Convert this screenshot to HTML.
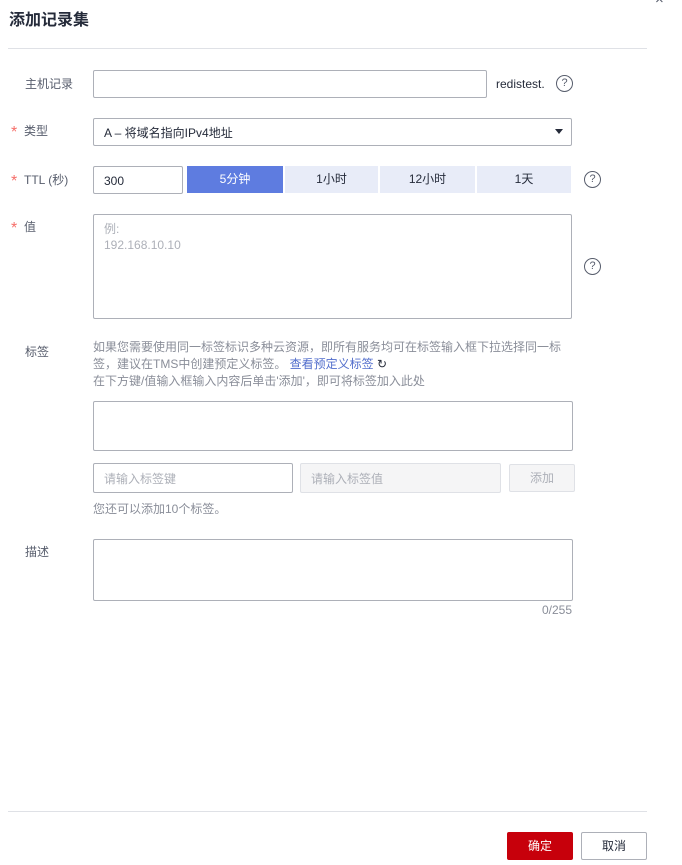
<!DOCTYPE html>
<html><head><meta charset="utf-8"><style>
*{box-sizing:border-box;margin:0;padding:0}
body{width:682px;height:865px;background:#fff;font-family:"Liberation Sans","Noto Sans CJK SC",sans-serif;font-size:12px;color:#252b3a;position:relative;overflow:hidden}
.a{position:absolute}
.box{position:absolute;border:1px solid #adb0b8;border-radius:2px;background:#fff}
.lbl{position:absolute;font-size:12px;color:#575d6c;line-height:16px}
.star{position:absolute;color:#f66f6a;font-size:16px;line-height:16px;top:2px}
.q{position:absolute;width:17px;height:17px;border:1.3px solid #575d6c;border-radius:50%;font-size:11px;line-height:14px;text-align:center;color:#575d6c}
.seg{position:absolute;top:166px;height:27px;background:#e8ecf8;color:#252b3a;text-align:center;line-height:27px}
.ph{color:#adb0b8}
.tip{position:absolute;left:93px;font-size:12px;color:#8a8e99;line-height:17px}
</style></head><body>
<div class="a" style="left:9px;top:6px;font-size:16px;font-weight:bold;color:#252b3a">添加记录集</div>
<div class="a" style="left:655px;top:-9px;font-size:15px;color:#575d6c">×</div>
<div class="a" style="left:8px;top:48px;width:639px;height:1px;background:#dfe1e6"></div>

<div class="lbl" style="left:25px;top:76px">主机记录</div>
<div class="box" style="left:93px;top:70px;width:394px;height:28px"></div>
<div class="a" style="left:496px;top:77px;color:#252b3a">redistest.</div>
<div class="q" style="left:556px;top:75px">?</div>

<div class="star" style="left:11px;top:125px">*</div><div class="lbl" style="left:24px;top:123px">类型</div>
<div class="box" style="left:93px;top:118px;width:479px;height:28px;padding:6px 10px;line-height:16px">A – 将域名指向IPv4地址</div>
<div class="a" style="left:555px;top:129px;width:0;height:0;border-left:4px solid transparent;border-right:4px solid transparent;border-top:5px solid #252b3a"></div>

<div class="star" style="left:11px;top:174px">*</div><div class="lbl" style="left:24px;top:172px">TTL (秒)</div>
<div class="box" style="left:93px;top:166px;width:90px;height:28px;padding:6px 10px;line-height:16px">300</div>
<div class="seg" style="left:187px;width:96px;background:#5e7ce0;color:#fff">5分钟</div>
<div class="seg" style="left:285px;width:93px">1小时</div>
<div class="seg" style="left:380px;width:95px">12小时</div>
<div class="seg" style="left:477px;width:94px">1天</div>
<div class="q" style="left:584px;top:171px">?</div>

<div class="star" style="left:11px;top:221px">*</div><div class="lbl" style="left:24px;top:219px">值</div>
<div class="box" style="left:93px;top:214px;width:479px;height:105px;padding:6px 10px;line-height:16px" ><span class="ph">例:<br>192.168.10.10</span></div>
<div class="q" style="left:584px;top:258px">?</div>

<div class="lbl" style="left:25px;top:344px">标签</div>
<div class="tip" style="top:339px;width:480px">如果您需要使用同一标签标识多种云资源，即所有服务均可在标签输入框下拉选择同一标签，建议在TMS中创建预定义标签。 <span style="color:#526ecc">查看预定义标签</span> <span style="color:#252b3a">↻</span><br>在下方键/值输入框输入内容后单击'添加'，即可将标签加入此处</div>
<div class="box" style="left:93px;top:401px;width:480px;height:50px"></div>
<div class="box" style="left:93px;top:463px;width:200px;height:30px;padding:7px 10px;line-height:16px"><span class="ph">请输入标签键</span></div>
<div class="box" style="left:300px;top:463px;width:201px;height:30px;padding:7px 10px;line-height:16px;background:#f5f5f6;border-color:#dfe1e6"><span class="ph">请输入标签值</span></div>
<div class="box" style="left:509px;top:464px;width:66px;height:28px;background:#f5f5f6;border-color:#dfe1e6;text-align:center;line-height:26px"><span class="ph">添加</span></div>
<div class="tip" style="top:501px">您还可以添加10个标签。</div>

<div class="lbl" style="left:25px;top:544px">描述</div>
<div class="box" style="left:93px;top:539px;width:480px;height:62px"></div>
<div class="a" style="left:530px;top:603px;width:42px;text-align:right;color:#8a8e99">0/255</div>

<div class="a" style="left:8px;top:811px;width:639px;height:1px;background:#dfe1e6"></div>
<div class="a" style="left:507px;top:832px;width:66px;height:28px;background:#c7000b;color:#fff;border-radius:2px;text-align:center;line-height:28px">确定</div>
<div class="box" style="left:581px;top:832px;width:66px;height:28px;text-align:center;line-height:26px">取消</div>
</body></html>
